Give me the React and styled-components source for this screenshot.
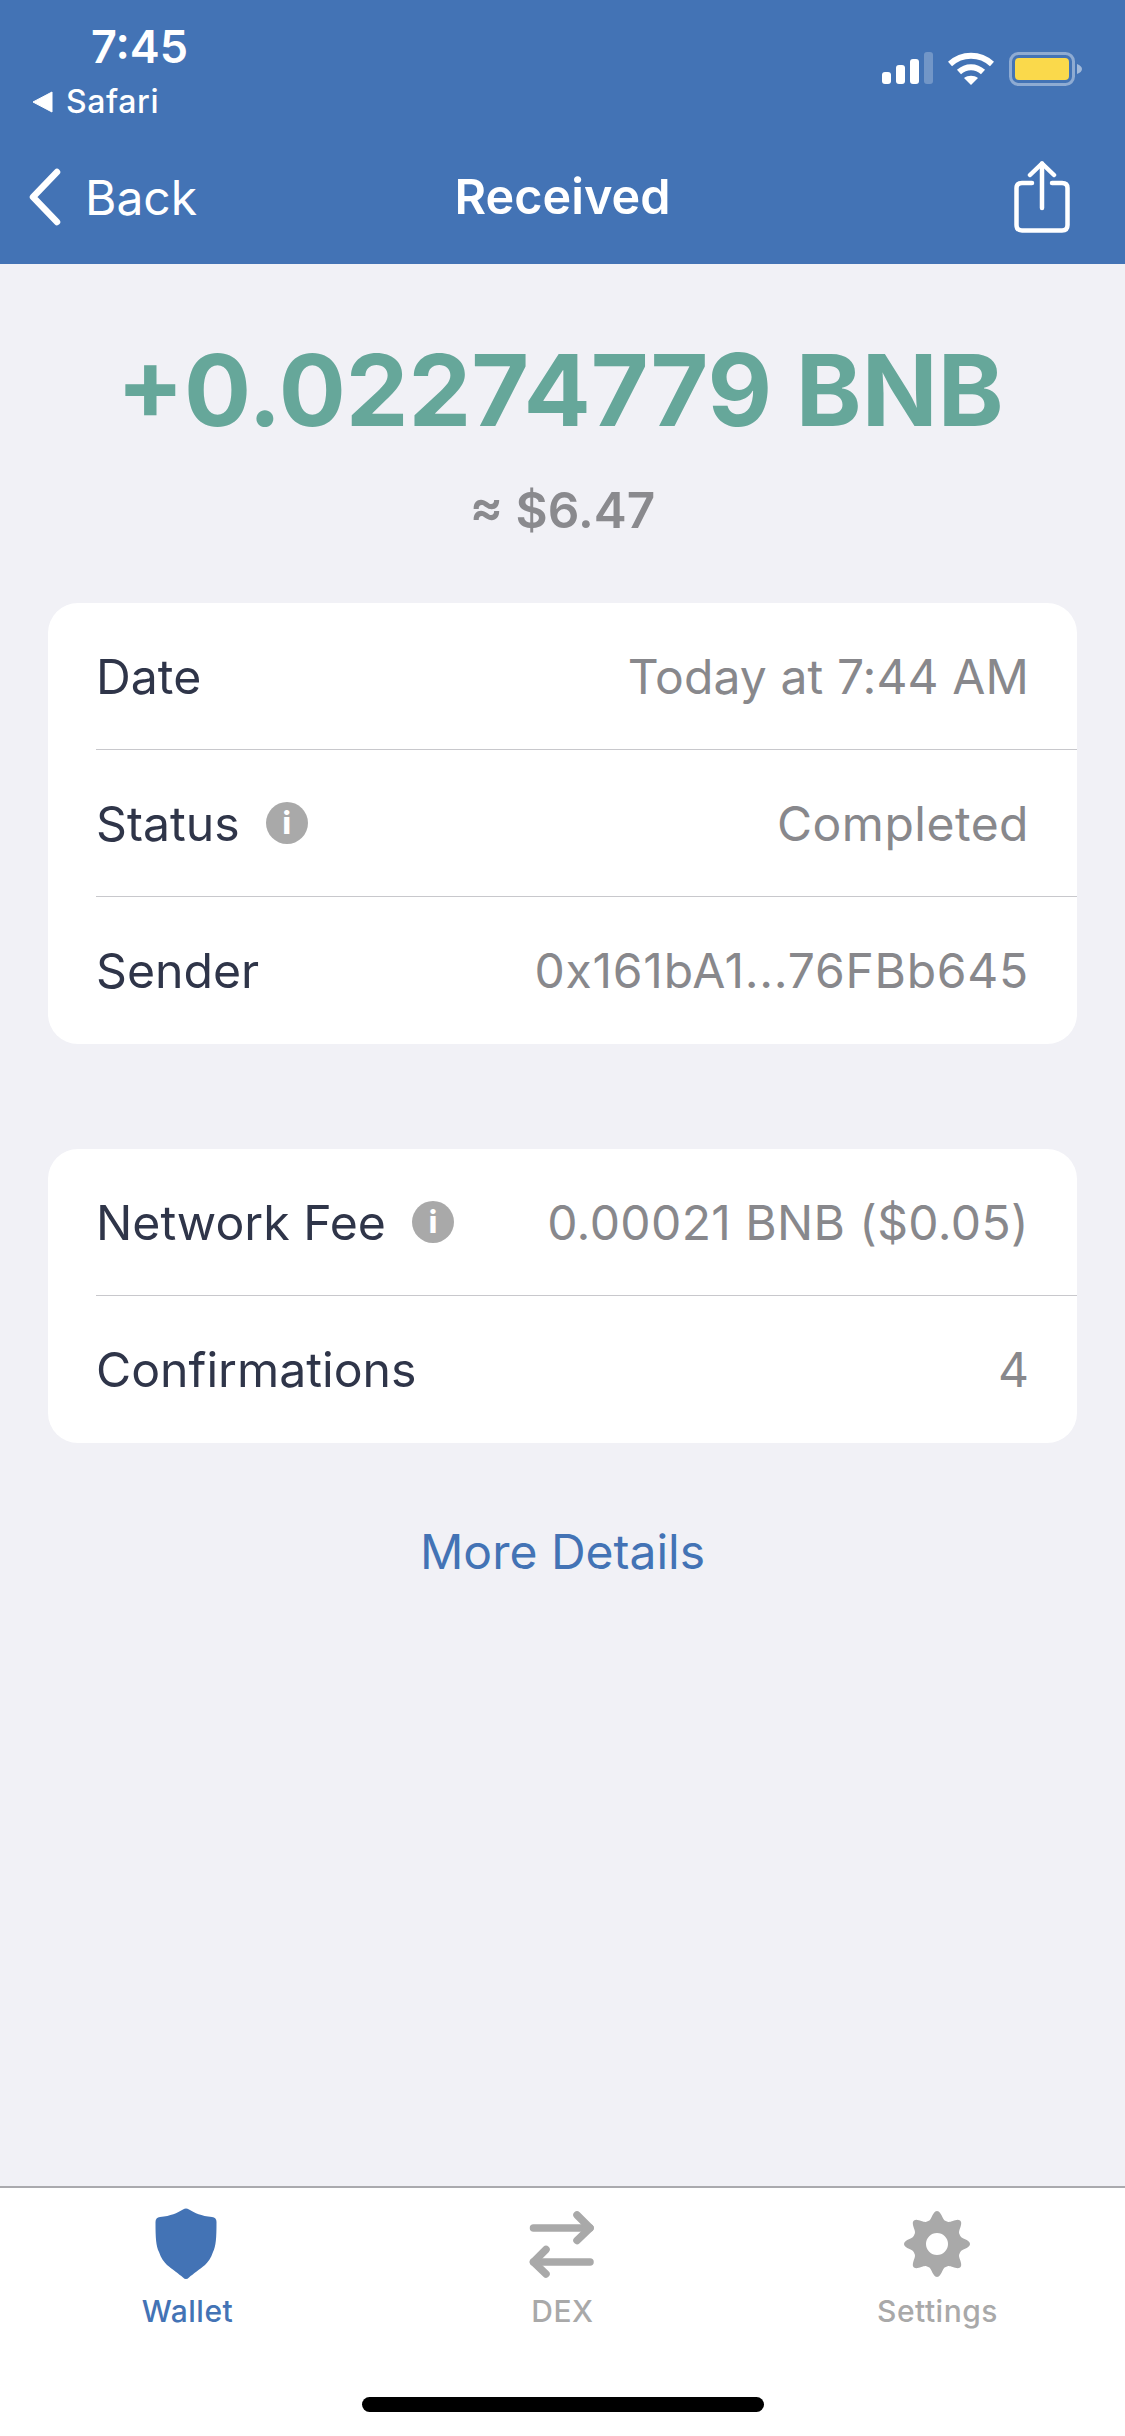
import React from "react";
import styled, { createGlobalStyle } from "styled-components";

const GlobalStyle = createGlobalStyle`
  html, body {
    margin: 0;
    padding: 0;
    background: #f1f1f6;
    font-family: Inter, "Liberation Sans", sans-serif;
  }
`;

const Page = styled.div`
  width: 1125px;
  height: 2436px;
  display: flex;
  flex-direction: column;
  background: #f1f1f6;
  overflow: hidden;
`;

const Header = styled.header`
  height: 264px;
  box-sizing: border-box;
  background: #4373b5;
  color: #fff;
  display: flex;
  flex-direction: column;
`;

const StatusBar = styled.div`
  height: 130px;
  box-sizing: border-box;
  padding: 24px 43px 0 32px;
  display: flex;
  justify-content: space-between;
`;

const StatusLeft = styled.div`
  display: flex;
  flex-direction: column;
  align-items: flex-start;
`;

const Clock = styled.div`
  font-size: 45px;
  line-height: 46px;
  font-weight: 600;
  margin-left: 59px;
`;

const BackApp = styled.div`
  display: flex;
  align-items: center;
  gap: 13px;
  margin-top: 14px;
  font-size: 32px;
  line-height: 36px;
  font-weight: 500;
  letter-spacing: 0.6px;
`;

const StatusIcons = styled.div`
  display: flex;
  align-items: flex-start;
  gap: 15px;
  padding-top: 28px;
`;

const NavBar = styled.nav`
  flex: 1;
  position: relative;
  display: flex;
  align-items: center;
  justify-content: space-between;
  padding: 0 55px 0 28px;
`;

const BackLink = styled.div`
  display: flex;
  align-items: center;
  gap: 24px;
  font-size: 48px;
`;

const NavTitle = styled.div`
  position: absolute;
  left: 0;
  right: 0;
  top: 37px;
  text-align: center;
  font-size: 48.5px;
  line-height: 60px;
  font-weight: 600;
`;

const Main = styled.main`
  flex: 1;
  display: flex;
  flex-direction: column;
  padding: 0 48px;
`;

const Amount = styled.div`
  margin-top: 66px;
  padding-right: 5px;
  text-align: center;
  font-size: 99.6px;
  line-height: 120px;
  font-weight: 700;
  color: #66a79a;
`;

const Fiat = styled.div`
  margin-top: 31px;
  text-align: center;
  font-size: 49.5px;
  line-height: 58px;
  font-weight: 600;
  color: #8a8a8e;
`;

const Card = styled.section`
  margin-top: ${(p) => p.$top}px;
  background: #fff;
  border-radius: 30px;
  overflow: hidden;
`;

const Row = styled.div`
  height: 147px;
  box-sizing: border-box;
  margin-left: 48px;
  padding-right: 48px;
  display: flex;
  align-items: center;
  justify-content: space-between;
  border-bottom: ${(p) => (p.$last ? "none" : "1.5px solid #c8c8cc")};
`;

const Label = styled.div`
  display: flex;
  align-items: center;
  gap: 26px;
  font-size: 48.2px;
  color: #2f3549;
`;

const InfoDot = styled.span`
  width: 42px;
  height: 42px;
  border-radius: 50%;
  background: #a9a9a9;
  color: #fff;
  font-size: 30px;
  font-weight: 800;
  line-height: 42px;
  text-align: center;
`;

const Value = styled.div`
  font-size: 48px;
  letter-spacing: ${(p) => p.$spread || 0}px;
  color: #88888c;
`;

const MoreLink = styled.a`
  margin-top: 79px;
  text-align: center;
  font-size: 48px;
  line-height: 60px;
  color: #4373b5;
`;

const TabBar = styled.footer`
  height: 250px;
  box-sizing: border-box;
  background: #fff;
  border-top: 2px solid #aaaaae;
  position: relative;
  display: grid;
  grid-template-columns: repeat(3, 375px);
`;

const Tab = styled.div`
  display: flex;
  flex-direction: column;
  align-items: center;
  padding-top: 20px;
  color: ${(p) => (p.$active ? "#4373b5" : "#a9a9a9")};
`;

const TabIcon = styled.div`
  height: 72px;
  display: flex;
  align-items: center;
  justify-content: center;
  margin-left: ${(p) => p.$shift || 0}px;
`;

const TabLabel = styled.div`
  margin-top: 13px;
  font-size: 30px;
  line-height: 36px;
  font-weight: 500;
  letter-spacing: 0.5px;
`;

const HomeIndicator = styled.div`
  position: absolute;
  left: 362px;
  top: 209px;
  width: 402px;
  height: 15px;
  border-radius: 8px;
  background: #000;
`;

const SignalIcon = () => (
  <svg width="51" height="32" viewBox="0 0 51 32">
    <rect x="0" y="20" width="9" height="12" rx="3" fill="#fff" />
    <rect x="14" y="13" width="9" height="19" rx="3" fill="#fff" />
    <rect x="28" y="7" width="9" height="25" rx="3" fill="#fff" />
    <rect x="42" y="0" width="9" height="32" rx="3" fill="#fff" opacity="0.25" />
  </svg>
);

const WifiIcon = () => (
  <svg width="46" height="33" viewBox="0 0 46 33">
    <path d="M2 12 C14 1 32 1 44 12" fill="none" stroke="#fff" strokeWidth="6" strokeLinejoin="round" />
    <path d="M11 20 C18 13.500 28 13.500 35 20" fill="none" stroke="#fff" strokeWidth="6" />
    <path d="M23 33 L16 26 C20 23 26 23 30 26 Z" fill="#fff" />
  </svg>
);

const BatteryIcon = () => (
  <svg width="73" height="34" viewBox="0 0 73 34">
    <rect x="1.500" y="1.500" width="63" height="31" rx="8" fill="none" stroke="#fff" strokeOpacity="0.4" strokeWidth="3" />
    <rect x="6" y="6" width="54" height="22" rx="4" fill="#fad94b" />
    <path d="M68 12 C71 13 73 15 73 17 C73 19 71 21 68 22 Z" fill="#fff" fillOpacity="0.5" />
  </svg>
);

const SafariArrow = () => (
  <svg width="21" height="22" viewBox="0 0 21 22">
    <path d="M1 11 L20 1 L20 21 Z" fill="#fff" stroke="#fff" strokeLinejoin="round" />
  </svg>
);

const ChevronIcon = () => (
  <svg width="33" height="58" viewBox="0 0 33 58">
    <path d="M29 4 L5 29 L29 54" fill="none" stroke="#fff" strokeWidth="6.500" strokeLinecap="round" strokeLinejoin="round" />
  </svg>
);

const ShareIcon = () => (
  <svg width="56" height="72" viewBox="0 0 56 72" fill="none" stroke="#fff" strokeWidth="4.500" strokeLinecap="round" strokeLinejoin="round">
    <path d="M18 22 H8 Q2.500 22 2.500 27 V64 Q2.500 69.500 8 69.500 H48 Q53.500 69.500 53.500 64 V27 Q53.500 22 48 22 H38" />
    <path d="M28 47 V2.500" />
    <path d="M16 14 L28 2.500 L40 14" />
  </svg>
);

const ShieldIcon = () => (
  <svg width="62" height="72" viewBox="0 0 62 72">
    <path
      d="M31 0.500 C32 0.500 33 1 34 1.500 C40 5 46 8 57 9 C60 9.500 61.500 11 61.500 14 C61.500 30 61 38 58 44 C56 50 53 54 50 57 C45 61 38 66 34 69.500 C32 71.500 30 71.500 28 69.500 C24 66 17 61 12 57 C9 54 6 50 4 44 C1 38 0.500 30 0.500 14 C0.500 11 2 9.500 5 9 C16 8 22 5 28 1.500 C29 1 30 0.500 31 0.500 Z"
      fill="currentColor"
    />
  </svg>
);

const SwapIcon = () => (
  <svg width="65" height="67" viewBox="0 0 65 67" fill="none" stroke="currentColor" strokeWidth="7.500" strokeLinecap="round" strokeLinejoin="round">
    <path d="M4.500 17 H61" />
    <path d="M48 4 L61 17 L48 29.500" />
    <path d="M61 51 H4.500" />
    <path d="M17 38.500 L4.500 51 L17 63" />
  </svg>
);

// wavy outline: eight soft teeth around a round hole
const gearOutline = Array.from({ length: 240 }, (_, i) => {
  const angle = (i / 240) * Math.PI * 2;
  const wave = Math.pow(0.5 + 0.5 * Math.cos(angle * 8), 1.5);
  const radius = 24.5 + 8.5 * wave;
  const x = 33 + radius * Math.sin(angle);
  const y = 33 - radius * Math.cos(angle);
  return `${i === 0 ? "M" : "L"}${x.toFixed(2)} ${y.toFixed(2)}`;
}).join(" ");

const GearIcon = () => (
  <svg width="66" height="66" viewBox="0 0 66 66">
    <path
      d={`${gearOutline} Z M44 33 A11 11 0 1 0 22 33 A11 11 0 1 0 44 33 Z`}
      fill="currentColor"
      fillRule="evenodd"
    />
  </svg>
);

const DetailRow = ({ label, info, value, spread, last }) => (
  <Row $last={last}>
    <Label>
      {label}
      {info && <InfoDot>i</InfoDot>}
    </Label>
    <Value $spread={spread}>{value}</Value>
  </Row>
);

const App = () => (
  <Page>
    <GlobalStyle />
    <Header>
      <StatusBar>
        <StatusLeft>
          <Clock>7:45</Clock>
          <BackApp>
            <SafariArrow />
            Safari
          </BackApp>
        </StatusLeft>
        <StatusIcons>
          <SignalIcon />
          <WifiIcon />
          <BatteryIcon />
        </StatusIcons>
      </StatusBar>
      <NavBar>
        <BackLink>
          <ChevronIcon />
          Back
        </BackLink>
        <NavTitle>Received</NavTitle>
        <ShareIcon />
      </NavBar>
    </Header>
    <Main>
      <Amount>+0.02274779 BNB</Amount>
      <Fiat>≈ $6.47</Fiat>
      <Card $top={64}>
        <DetailRow label="Date" value="Today at 7:44 AM" spread={0.1} />
        <DetailRow label="Status" info value="Completed" spread={0.5} />
        <DetailRow label="Sender" value="0x161bA1...76FBb645" spread={0.75} last />
      </Card>
      <Card $top={105}>
        <DetailRow label="Network Fee" info value="0.00021 BNB ($0.05)" spread={0.4} />
        <DetailRow label="Confirmations" value="4" last />
      </Card>
      <MoreLink>More Details</MoreLink>
    </Main>
    <TabBar>
      <Tab $active>
        <TabIcon $shift={-4}>
          <ShieldIcon />
        </TabIcon>
        <TabLabel>Wallet</TabLabel>
      </Tab>
      <Tab>
        <TabIcon $shift={-3}>
          <SwapIcon />
        </TabIcon>
        <TabLabel>DEX</TabLabel>
      </Tab>
      <Tab>
        <TabIcon $shift={-2}>
          <GearIcon />
        </TabIcon>
        <TabLabel>Settings</TabLabel>
      </Tab>
      <HomeIndicator />
    </TabBar>
  </Page>
);

export default App;
